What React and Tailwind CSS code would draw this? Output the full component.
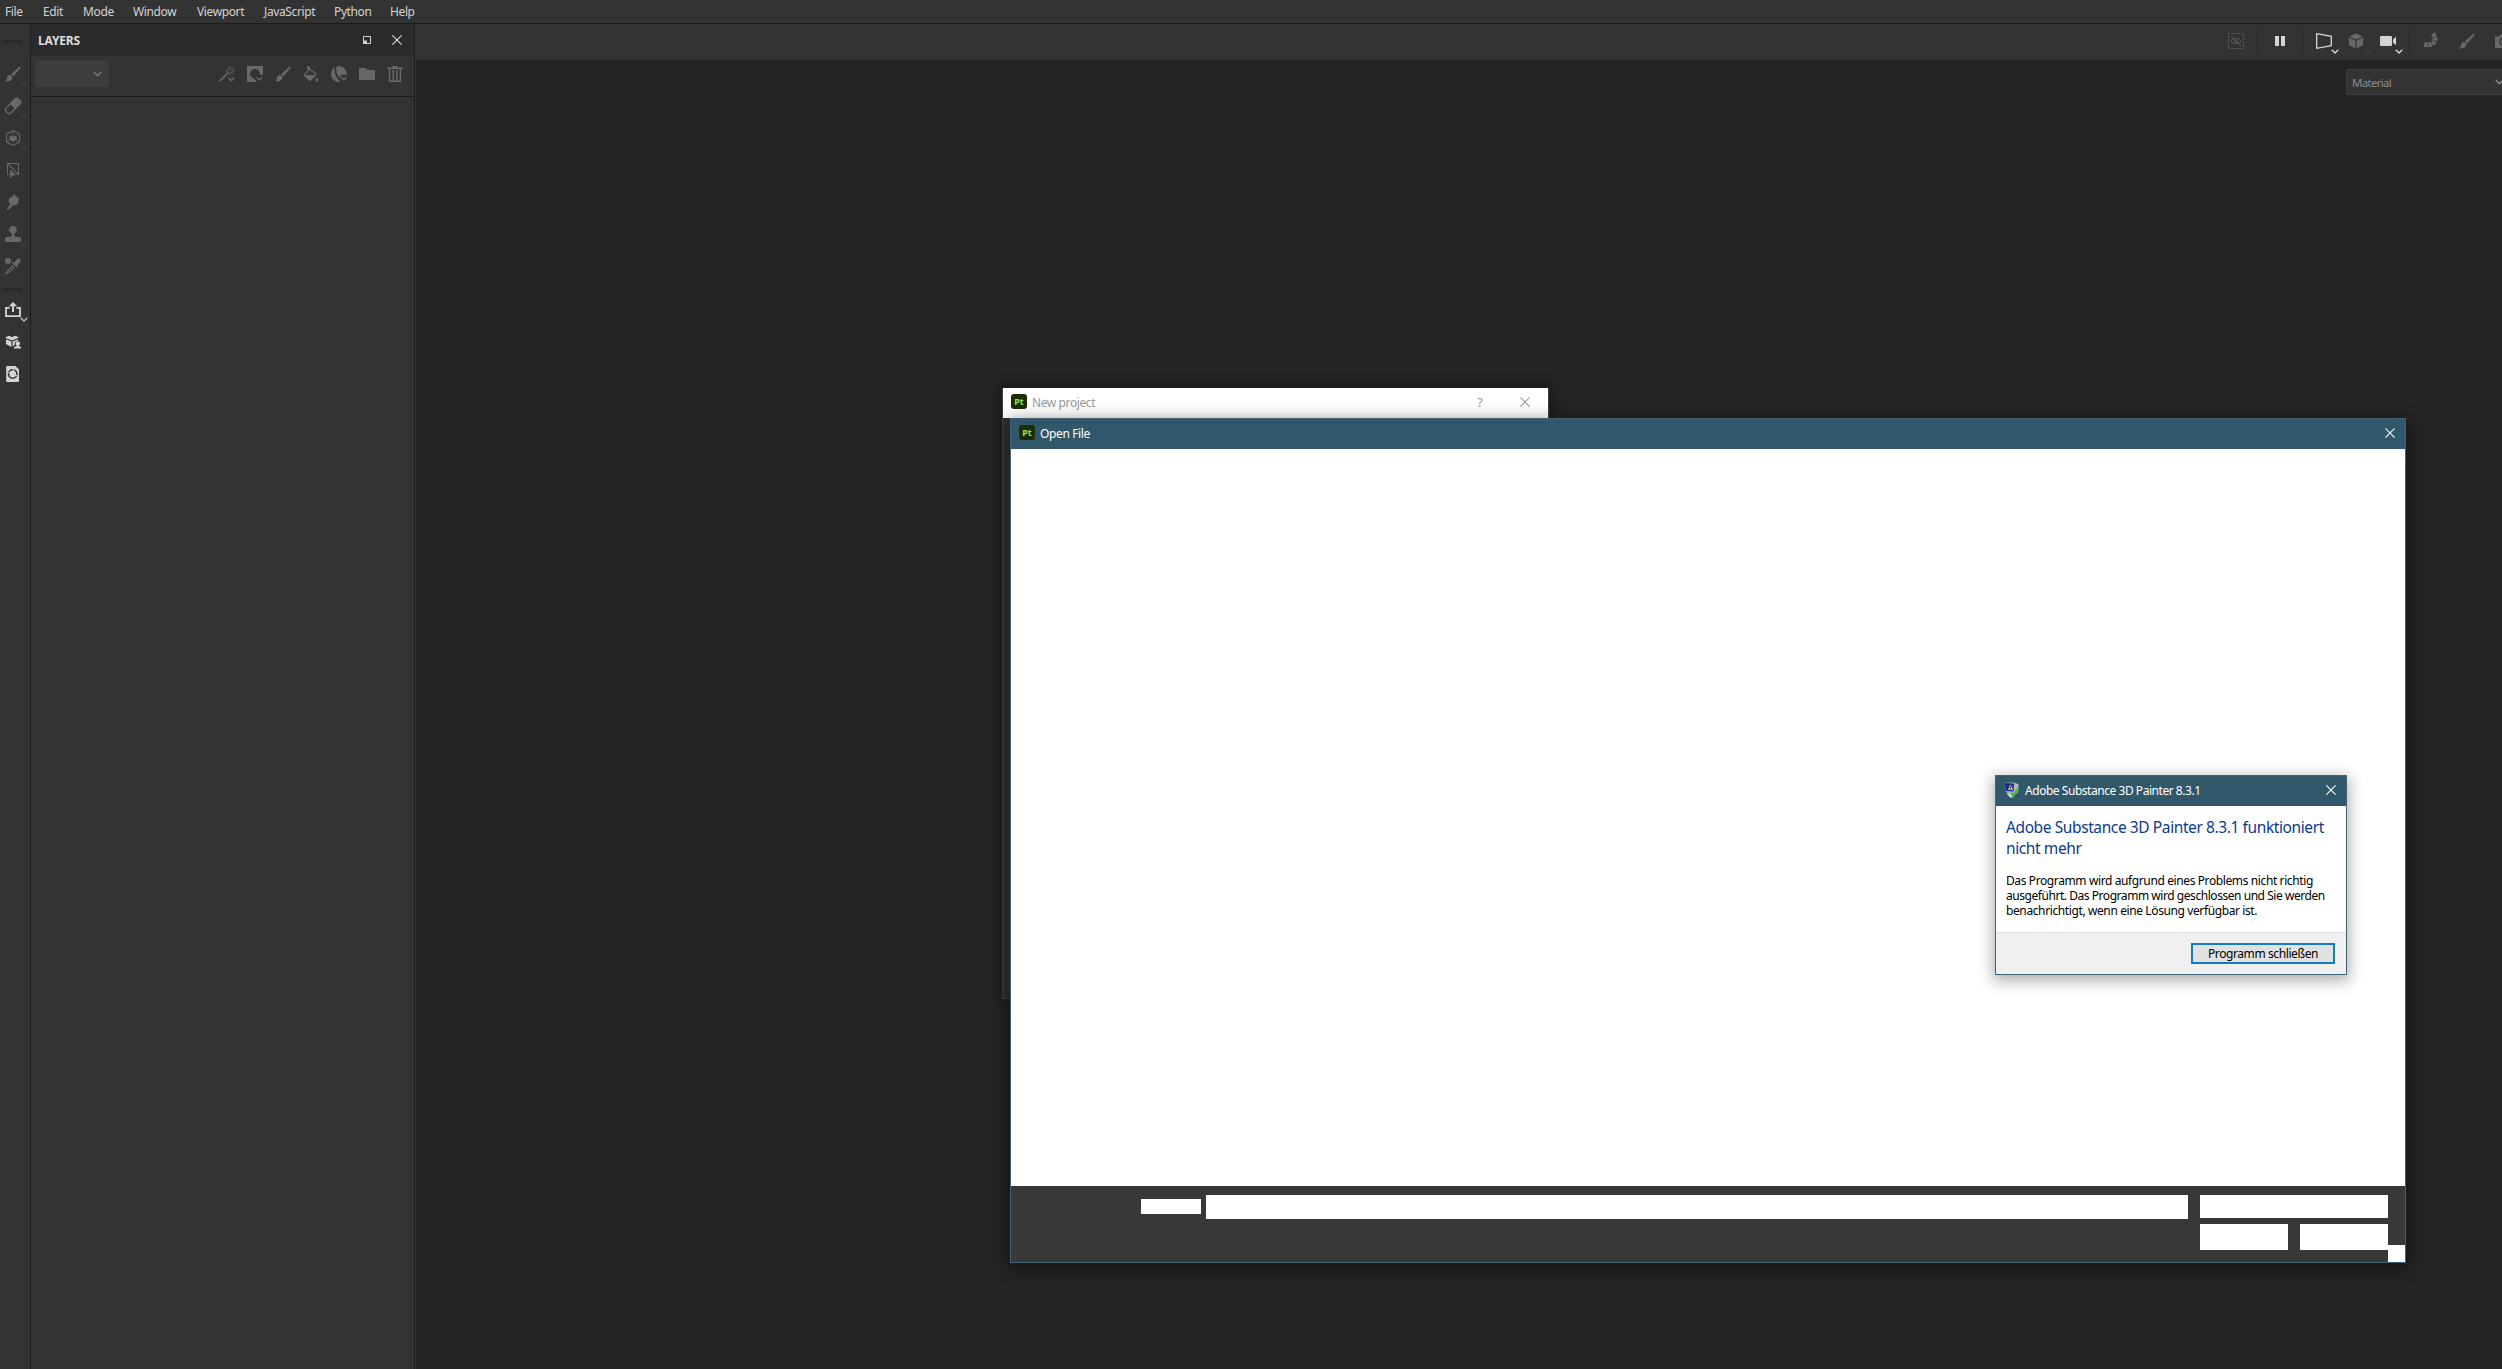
import React from 'react';

const menuItems = [
    { label: 'File', width: 'w-[38px]' },
    { label: 'Edit', width: 'w-[40px]' },
    { label: 'Mode', width: 'w-[50px]' },
    { label: 'Window', width: 'w-[64px]' },
    { label: 'Viewport', width: 'w-[67px]' },
    { label: 'JavaScript', width: 'w-[70px]' },
    { label: 'Python', width: 'w-[56px]' },
    { label: 'Help', width: 'w-[40px]' },
];

// All icons share a 16x16 grid
const Icon = ({ children, className = '' }) => (
    <svg viewBox="0 0 16 16" className={`block w-4 h-4 shrink-0 overflow-visible ${className}`} fill="currentColor">
        {children}
    </svg>
);

const Chevron = ({ className = 'w-2 h-[5px]' }) => (
    <svg viewBox="0 0 8 5" className={`block ${className}`} fill="none" stroke="currentColor" strokeWidth="1.4">
        <path d="M0.7 0.7 L4 4 L7.3 0.7" />
    </svg>
);

const CloseIcon = ({ className = '' }) => (
    <svg viewBox="0 0 10 10" className={`block w-[10px] h-[10px] ${className}`} fill="none" stroke="currentColor" strokeWidth="1.1">
        <path d="M0.4 0.4 L9.6 9.6 M9.6 0.4 L0.4 9.6" />
    </svg>
);

const BrushIcon = () => (
    <Icon>
        <path d="M14.6 0.4 L15.8 1.6 L8.4 10.4 L6 8.2 Z" />
        <path d="M5.2 9 L7.5 11.2 C7.3 14 4.5 15.9 0.2 15.6 C2 14.4 1.4 13.2 2.2 11 C2.8 9.6 4 9 5.2 9 Z" />
    </Icon>
);

const EraserIcon = () => (
    <Icon>
        <g transform="rotate(-45 8 8)">
            <rect x="-0.6" y="4.6" width="17.2" height="6.8" rx="2.2" fill="none" stroke="currentColor" strokeWidth="1.4" />
            <path d="M7.4 4 H14.4 a2.8 2.8 0 0 1 2.8 2.8 V9.2 a2.8 2.8 0 0 1 -2.8 2.8 H7.4 Z" />
        </g>
    </Icon>
);

const ProjectionIcon = () => (
    <Icon>
        <path d="M8 0.6 L14.6 4.2 V11.8 L8 15.4 L1.4 11.8 V4.2 Z" fill="none" stroke="currentColor" strokeWidth="1.1" />
        <path d="M4.4 5.4 L8 6.6 L11.6 5.4 V9.4 L8 12 L4.4 9.4 Z" />
        <path d="M8 1 V5.6 M2 11.6 L5 9.2 M14 11.6 L11 9.2" stroke="currentColor" />
    </Icon>
);

const PolygonIcon = () => (
    <Icon>
        <path d="M4.4 12.5 H2.5 V1.5 H13.5 V12.5 H11.5 M2.5 1.5 L13.5 12.5" fill="none" stroke="currentColor" strokeWidth="1.1" />
        <path d="M5 7.6 L11.4 13 L8.4 13.2 L5 16 Z" />
    </Icon>
);

const SmudgeIcon = () => (
    <Icon>
        <path d="M8.4 0.8 C9.4 0.4 10.2 1 10.6 1.8 L14 4.4 L13.2 9 L11.4 11 L7.6 11.6 L3.2 16 L1.6 15.4 L5.4 10 L3.4 8 L4 4.6 L7.4 2.6 Z" />
    </Icon>
);

const StampIcon = () => (
    <Icon>
        <circle cx="8" cy="3.8" r="3.8" />
        <path d="M6.8 6 H9.2 V9.6 C9.2 10.6 10.4 11 12 11 H14.4 C15.6 11 16 11.8 16 12.8 V14.6 C16 15.6 15.4 16 14.6 16 H1.4 C0.6 16 0 15.6 0 14.6 V12.8 C0 11.8 0.4 11 1.6 11 H4 C5.6 11 6.8 10.6 6.8 9.6 Z" />
    </Icon>
);

const PickerIcon = () => (
    <Icon>
        <circle cx="3" cy="3" r="3" />
        <path d="M9.4 5 C10.6 3.4 11.6 0.4 13.8 0.6 C15.8 0.8 16.4 3 15 4.4 L12.6 6.8 L13 8.4 L11.8 9.2 L6.8 4.4 L7.8 3.2 Z" />
        <path d="M8.4 7 L3 12.4 L1.2 15.4 L4.4 14 L10 8.6" fill="none" stroke="currentColor" strokeWidth="1.2" />
    </Icon>
);

const ExportIcon = () => (
    <Icon>
        <path d="M4.6 5.8 H1 V14.2 H15 V5.8 H11.4" fill="none" stroke="currentColor" strokeWidth="1.8" />
        <path d="M8 0 L12.2 4.2 H9 V10 H7 V4.2 H3.8 Z" />
    </Icon>
);

const AssetsIcon = () => (
    <Icon>
        <path d="M3.6 1.8 L7 3 L10.4 1.8 L14 3.6 L7 6.6 L0 3.8 Z" />
        <path d="M1 5.2 L6.4 7.6 V13 L1 10 Z M7.6 7.6 L13 5.2 V6.4 L10 8 L9.4 11.2 L7.6 12.4 Z" />
        <circle cx="12.8" cy="9.4" r="2.2" />
        <path d="M12 10.8 H13.8 C13.8 12.4 14.2 12.4 16 13 V14.6 H9 V13 C11.6 12.4 12 12.4 12 10.8 Z" />
    </Icon>
);

const ResourceIcon = () => (
    <Icon>
        <path fillRule="evenodd" d="M2.4 0 H10.4 L14 3.6 V14.8 C14 15.6 13.6 16 12.8 16 H2.4 C1.6 16 1.2 15.6 1.2 14.8 V1.2 C1.2 0.4 1.6 0 2.4 0 Z M7.7 3 A5 5 0 1 0 7.7 13 A5 5 0 1 0 7.7 3 Z M7.7 4.6 A3.4 3.4 0 1 1 7.7 11.4 A3.4 3.4 0 1 1 7.7 4.6 Z" />
        <path d="M3 6.4 L5 7.4 M10.4 8.8 L12.6 9.8 M8.6 3 L8 5" stroke="currentColor" />
    </Icon>
);

const WandIcon = () => (
    <Icon>
        <path d="M0.6 15.4 L9.4 6.4" stroke="currentColor" strokeWidth="1.8" />
        <path d="M10.8 0 V3.6 M10.8 6.4 V9 M6.4 5 H9.4 M12.4 5 H15.6 M7.8 2 L9.6 3.8 M14.2 1.8 L12 4 M12 6 L14.2 8.2" stroke="currentColor" />
        <path d="M9.6 11.8 L12.4 14.6 L15.2 11.8" fill="none" stroke="currentColor" strokeWidth="1.5" />
    </Icon>
);

const MaskIcon = () => (
    <Icon>
        <path d="M0 0 H16 V8.8 H12.8 A4.9 4.9 0 1 0 7.2 12.6 L9.4 16 H0 Z" />
        <path d="M9.6 11.2 L12.4 14 L15.2 11.2" fill="none" stroke="currentColor" strokeWidth="1.5" />
    </Icon>
);

const FillIcon = () => (
    <Icon>
        <path d="M5.4 0.8 V5 M5.4 2 L13.2 8.4 L7 14.4 L1 9 L6.6 3.4" fill="none" stroke="currentColor" strokeWidth="1.2" />
        <path d="M1 9 H13.2 L7 15.2 Z" />
        <circle cx="5.4" cy="1.6" r="1.5" />
        <path d="M14 11.4 C15 13 15.6 13.6 15.4 14.6 C15 16 12.8 16 12.6 14.6 C12.4 13.6 13 13 14 11.4 Z" />
    </Icon>
);

const SmartMaterialIcon = () => (
    <Icon>
        <path d="M4 1.2 C2.4 6 5.4 12.6 9.4 15.6 C4.4 17 0 13 0 8 C0 5 1.6 2.4 4 1.2 Z" />
        <path d="M5.4 0.6 C10.6 -1.2 16 2.6 16 8.4 L9.4 9 V12.6 C6.4 9.6 4.6 4.6 5.4 0.6 Z" />
        <path d="M10.2 11.2 L12.8 13.8 L15.4 11.2" fill="none" stroke="currentColor" strokeWidth="1.5" />
    </Icon>
);

const FolderIcon = () => (
    <Icon>
        <path d="M0 2 H6.4 L8.6 4 H16 V14 H0 Z" />
    </Icon>
);

const TrashIcon = () => (
    <Icon>
        <path d="M0 1.4 H5.4 V0 H10.6 V1.4 H16 V3 H0 Z" />
        <path d="M2.6 3 V15.2 H13.4 V3 M6.2 4 V15 M9.8 4 V15" fill="none" stroke="currentColor" strokeWidth="1.5" />
    </Icon>
);

const SymmetryOffIcon = () => (
    <Icon>
        <rect x="0.5" y="0.5" width="15" height="15" fill="none" stroke="currentColor" strokeDasharray="2 1.25" />
        <path d="M3 8 C5 4.4 11 4.4 13 8 C11 11.6 5 11.6 3 8 Z M3 3 L13 13 M6.4 7.2 L8.8 9.8" fill="none" stroke="currentColor" />
    </Icon>
);

const CubeIcon = () => (
    <Icon>
        <path d="M8 0.6 L14.6 3.4 L8 6.6 L1.4 3.4 Z M0.8 4.4 L7.4 7.6 V15.4 L0.8 12 Z M15.2 4.4 L8.6 7.6 V15.4 L15.2 12 Z" />
    </Icon>
);

const CameraIcon = () => (
    <Icon>
        <rect x="0" y="3" width="12" height="10" rx="1.2" />
        <path d="M13 6.4 L16 3.8 V12.2 L13 9.6 Z" />
    </Icon>
);

const RenderIcon = () => (
    <Icon>
        <path d="M9.6 1 C14.6 5 12.4 13.6 1.2 11.4" fill="none" stroke="currentColor" strokeWidth="5" strokeDasharray="3.3 0.8" />
    </Icon>
);

const PhotoIcon = () => (
    <Icon>
        <path fillRule="evenodd" d="M1 3.4 H4 L5.4 1.4 H12 V15 H1 C0.4 15 0 14.6 0 14 V4.4 C0 3.8 0.4 3.4 1 3.4 Z M8.8 4 A4.6 4.6 0 1 0 8.8 13.2 A4.6 4.6 0 1 0 8.8 4 Z" />
        <circle cx="8.8" cy="8.6" r="3.2" />
    </Icon>
);

const Grip = () => (
    <div className="flex gap-px w-5 h-[3px] ml-[3px]">
        {[...Array(10)].map((_, i) => (
            <span key={i} className="w-px h-[3px] bg-[#202020]" />
        ))}
    </div>
);

const Tool = ({ icon, className, chevron }) => (
    <div className={`relative h-8 pl-[5px] flex items-center ${className || 'text-[#686868]'}`}>
        {icon}
        {chevron && <Chevron className={`w-2 h-[5px] absolute left-5 top-[23px] ${chevron}`} />}
    </div>
);

const PtBadge = () => (
    <span className="flex items-center justify-center w-4 h-[15px] rounded-[3px] bg-[#1c2d06] text-[#99e050] text-[9px] leading-none font-bold">
        Pt
    </span>
);

// Small monitor with a warning sign and a green check over it
const CrashIcon = () => (
    <svg viewBox="0 0 16 16" className="block w-4 h-4">
        <path d="M0.5 0.8 L10 0.6 L14.6 2.2 L14 10.4 L8.6 13.4 L1.8 9.8 Z" fill="#aeb6c3" />
        <path d="M0.6 1 L10 1.6 L9.6 9.4 L1.8 9 Z" fill="#142d9b" />
        <path d="M6.4 2.6 L9.2 7.8 H3.8 Z" fill="#f0cf2c" />
        <path d="M6.4 4.4 V6.8" stroke="#222" strokeWidth="0.9" />
        <path d="M2.4 11 L6 15.6 L9 15.4 L7 11.8 Z" fill="#d8dce2" />
        <path d="M6.8 11 L9.2 13.6 L14.4 6.8" fill="none" stroke="#4fb848" strokeWidth="2.5" />
    </svg>
);

const ToolBar = () => (
    <div className="w-[31px] shrink-0 bg-[#333333] border-r border-[#1c1c1c] pt-[16px]">
        <Grip />
        <div className="pt-[15px]">
            <Tool icon={<BrushIcon />} chevron="text-[#414141]" />
            <Tool icon={<EraserIcon />} chevron="text-[#414141]" />
            <Tool icon={<ProjectionIcon />} chevron="text-[#414141]" />
            <Tool icon={<PolygonIcon />} />
            <Tool icon={<SmudgeIcon />} />
            <Tool icon={<StampIcon />} chevron="text-[#3c3c3c]" />
            <Tool icon={<PickerIcon />} />
        </div>
        <div className="pt-[6px]">
            <Grip />
        </div>
        <div className="pt-[3px]">
            <Tool icon={<ExportIcon />} className="text-[#d4d4d4]" chevron="text-[#b8b8b8]" />
            <Tool icon={<AssetsIcon />} className="text-[#d4d4d4]" />
            <Tool icon={<ResourceIcon />} className="text-[#d4d4d4]" />
        </div>
    </div>
);

const LayersPanel = () => (
    <div className="flex w-[385px] shrink-0 bg-[#333333]">
        <div className="flex-1">
            <div className="flex items-center h-8 bg-[#2b2b2b] pl-[7px] pr-3">
                <span className="pt-[2px] text-xs font-bold tracking-[-0.2px] text-[#dcdcdc]">LAYERS</span>
                <svg viewBox="0 0 8 8" className="ml-auto w-2 h-2" fill="none" stroke="#cfcfcf">
                    <path d="M0.5 0.5 H7.5 V7.5 H0.5 Z" />
                    <path d="M0 4.5 H4 V8 H0 Z" fill="#cfcfcf" stroke="none" />
                </svg>
                <CloseIcon className="ml-[21px] text-[#dcdcdc]" />
            </div>
            <div className="flex items-center h-[41px] border-b border-[#1c1c1c] pl-1 pr-[11px] pb-1">
                <div className="flex items-center justify-end w-[74px] h-[26px] pr-[7px] rounded-[3px] bg-[#3d3d3d] text-[#777777]">
                    <Chevron className="w-[9px] h-[6px]" />
                </div>
                <div className="flex gap-3 ml-auto text-[#686868]">
                    <WandIcon />
                    <MaskIcon />
                    <BrushIcon />
                    <FillIcon />
                    <SmartMaterialIcon />
                    <FolderIcon />
                    <TrashIcon />
                </div>
            </div>
        </div>
        <div className="w-[2px] border-l border-[#1c1c1c]" />
    </div>
);

const Separator = () => <span className="w-px h-6 bg-[#252525]" />;

const ViewportBar = () => (
    <div className="flex items-center justify-end h-9 shrink-0 bg-[#333333] text-[#686868] overflow-hidden pb-[2px]">
        <span className="text-[#5c5c5c]"><SymmetryOffIcon /></span>
        <span className="ml-[13px] flex"><Separator /></span>
        <span className="flex justify-between w-[10px] h-[10px] ml-[17px] mr-[17px]">
            <span className="w-1 h-[10px] bg-[#d4d4d4]" />
            <span className="w-1 h-[10px] bg-[#d4d4d4]" />
        </span>
        <Separator />
        <span className="relative ml-[13px] text-[#d4d4d4]">
            <Icon>
                <path d="M0.7 0.7 L15.3 3.4 V12.6 L0.7 15.3 Z" fill="none" stroke="currentColor" strokeWidth="1.3" />
            </Icon>
            <Chevron className="w-2 h-[5px] absolute left-[15px] top-[16px]" />
        </span>
        <span className="relative ml-4">
            <CubeIcon />
            <Chevron className="w-2 h-[5px] absolute left-[16px] top-[16px] text-[#3f3f3f]" />
        </span>
        <span className="relative ml-4 text-[#d4d4d4]">
            <CameraIcon />
            <Chevron className="w-2 h-[5px] absolute left-[15px] top-[16px]" />
        </span>
        <span className="ml-[13px] flex"><Separator /></span>
        <span className="ml-[13px]"><RenderIcon /></span>
        <span className="ml-5"><BrushIcon /></span>
        <span className="ml-5 w-[7px]"><PhotoIcon /></span>
    </div>
);

const NewProjectDialog = () => (
    <div className="absolute left-[1002px] top-[388px] w-[547px] h-[611px] flex flex-col bg-[#303030] border-x border-b border-[#404040] shadow-[0_0_12px_2px_rgba(0,0,0,0.35)]">
        <div className="flex h-[30px] bg-white text-[#999999] pl-2 pr-[18px]">
            <div className="pt-[6px]"><PtBadge /></div>
            <span className="ml-[5px] mt-[5px] text-xs leading-5 tracking-[-0.4px]">New project</span>
            <span className="ml-auto mt-1 text-[13px] leading-5">?</span>
            <CloseIcon className="mt-[9px] ml-[37px]" />
        </div>
    </div>
);

const OpenFileDialog = () => (
    <div className="absolute left-[1010px] top-[418px] w-[1396px] h-[845px] flex flex-col border border-[#426273] bg-[#383838] shadow-[0_4px_16px_2px_rgba(0,0,0,0.45)]">
        <div className="flex h-[30px] shrink-0 bg-[#31576a] text-white pl-2 pr-[10px]">
            <div className="pt-[6px]"><PtBadge /></div>
            <span className="ml-[5px] mt-[5px] text-xs leading-5 tracking-[-0.36px]">Open File</span>
            <CloseIcon className="ml-auto mt-[9px]" />
        </div>
        <div className="h-[737px] shrink-0 bg-white" />
        <div className="flex flex-1 pl-[130px]">
            <div className="w-[60px] h-[15px] mt-[13px] bg-white" />
            <div className="w-[982px] h-6 mt-[9px] ml-[5px] bg-white" />
            <div className="w-[188px] mt-[9px] ml-3">
                <div className="h-[23px] bg-white" />
                <div className="flex gap-3 mt-[6px]">
                    <div className="flex-1 h-[26px] bg-white" />
                    <div className="flex-1 h-[26px] bg-white" />
                </div>
            </div>
            <div className="w-[17px] h-[17px] self-end bg-white" />
        </div>
    </div>
);

const CrashDialog = () => (
    <div className="absolute left-[1995px] top-[775px] w-[352px] h-[200px] flex flex-col border border-[#3f6478] bg-white shadow-[0_4px_14px_2px_rgba(0,0,0,0.32)]">
        <div className="flex h-[30px] shrink-0 bg-[#31576a] text-white pl-2 pr-[10px]">
            <div className="pt-[6px]"><CrashIcon /></div>
            <span className="ml-[5px] mt-[5px] text-xs leading-5 tracking-[-0.46px]">Adobe Substance 3D Painter 8.3.1</span>
            <CloseIcon className="ml-auto mt-[9px]" />
        </div>
        <div className="flex-1 pl-[10px] pt-[11px] whitespace-nowrap">
            <div className="text-[15.5px] leading-[21px] tracking-[-0.4px] text-[#0b3a91]">
                <p>Adobe Substance 3D Painter 8.3.1 funktioniert</p>
                <p>nicht mehr</p>
            </div>
            <div className="mt-[14px] text-xs leading-[15px] tracking-[-0.39px] text-black">
                <p>Das Programm wird aufgrund eines Problems nicht richtig</p>
                <p className="tracking-[-0.45px]">ausgeführt. Das Programm wird geschlossen und Sie werden</p>
                <p>benachrichtigt, wenn eine Lösung verfügbar ist.</p>
            </div>
        </div>
        <div className="flex justify-end h-[42px] shrink-0 border-t border-[#dfdfdf] bg-[#f0f0f0] pt-[10px] pr-[11px]">
            <button className="w-[144px] h-[21px] border-2 border-[#0f7dc0] bg-[#e1e1e1] text-xs leading-[17px] tracking-[-0.4px] text-black">
                Programm schließen
            </button>
        </div>
    </div>
);

const App = () => {
    return (
        <div className="relative flex flex-col w-[2502px] h-[1369px] overflow-hidden bg-[#242424] font-['Noto_Sans',sans-serif]">
            <nav className="flex h-6 shrink-0 pl-[5px] bg-[#333333] border-b border-[#1c1c1c] text-xs leading-6 tracking-[-0.38px] text-[#d2d2d2]">
                {menuItems.map((item) => (
                    <span key={item.label} className={`${item.width} shrink-0`}>{item.label}</span>
                ))}
            </nav>

            <div className="flex flex-1 min-h-0">
                <ToolBar />
                <LayersPanel />
                <div className="flex flex-col flex-1 min-w-0">
                    <ViewportBar />
                    <div className="flex justify-end pt-[9px]">
                        <div className="flex items-center w-[156px] h-[26px] pl-[5px] overflow-hidden rounded-l-[3px] border border-r-0 border-[#3f3f3f] bg-[#333333] text-[#8a8a8a]">
                            <span className="flex-1 pt-px text-[11.5px] tracking-[-0.7px]">Material</span>
                            <Chevron className="w-[9px] h-[6px] -mr-[2px] shrink-0" />
                        </div>
                    </div>
                </div>
            </div>

            <NewProjectDialog />
            <OpenFileDialog />
            <CrashDialog />
        </div>
    );
};

export default App;
